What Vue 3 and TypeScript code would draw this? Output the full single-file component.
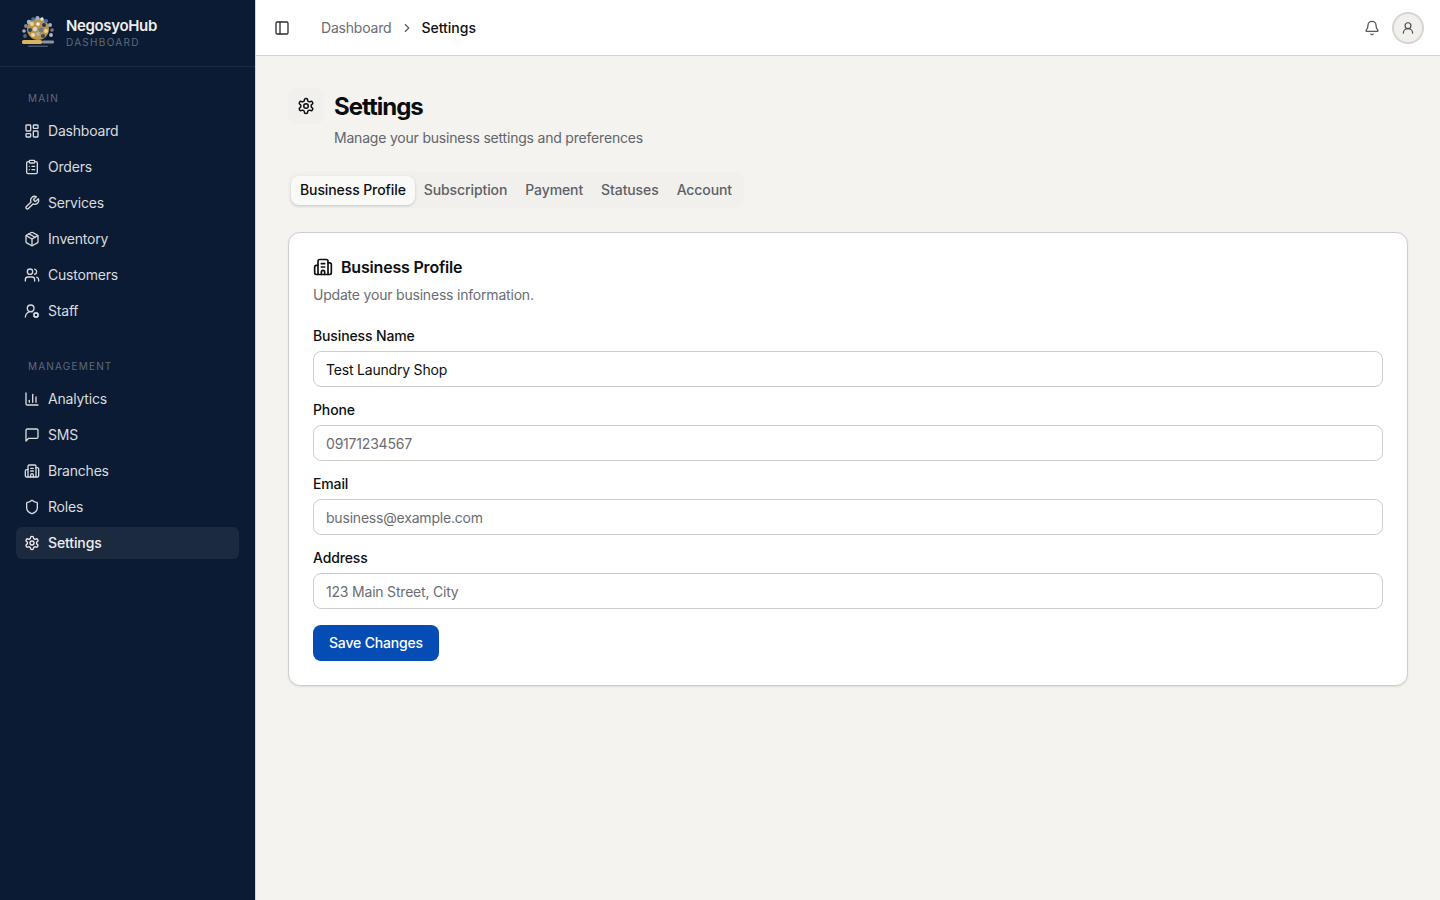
<script setup lang="ts">
import { ref } from 'vue'

interface NavItem {
	label: string
	icon: string[]
}

const gear = [
	'M12.22 2h-.44a2 2 0 0 0-2 2v.18a2 2 0 0 1-1 1.73l-.43.25a2 2 0 0 1-2 0l-.15-.08a2 2 0 0 0-2.73.73l-.22.38a2 2 0 0 0 .73 2.73l.15.1a2 2 0 0 1 1 1.72v.51a2 2 0 0 1-1 1.74l-.15.09a2 2 0 0 0-.73 2.73l.22.38a2 2 0 0 0 2.73.73l.15-.08a2 2 0 0 1 2 0l.43.25a2 2 0 0 1 1 1.73V20a2 2 0 0 0 2 2h.44a2 2 0 0 0 2-2v-.18a2 2 0 0 1 1-1.73l.43-.25a2 2 0 0 1 2 0l.15.08a2 2 0 0 0 2.73-.73l.22-.39a2 2 0 0 0-.73-2.73l-.15-.08a2 2 0 0 1-1-1.74v-.5a2 2 0 0 1 1-1.74l.15-.09a2 2 0 0 0 .73-2.73l-.22-.38a2 2 0 0 0-2.73-.73l-.15.08a2 2 0 0 1-2 0l-.43-.25a2 2 0 0 1-1-1.73V4a2 2 0 0 0-2-2z',
	'M9 12a3 3 0 1 0 6 0a3 3 0 1 0-6 0',
]

const building = [
	'M10 12h4',
	'M10 8h4',
	'M14 21v-3a2 2 0 0 0-4 0v3',
	'M6 10H4a2 2 0 0 0-2 2v7a2 2 0 0 0 2 2h16a2 2 0 0 0 2-2V9a2 2 0 0 0-2-2h-2',
	'M6 21V5a2 2 0 0 1 2-2h8a2 2 0 0 1 2 2v16',
]

const mainNav: NavItem[] = [
	{
		label: 'Dashboard',
		icon: [
			'M4 3h5a1 1 0 0 1 1 1v7a1 1 0 0 1-1 1H4a1 1 0 0 1-1-1V4a1 1 0 0 1 1-1z',
			'M15 3h5a1 1 0 0 1 1 1v3a1 1 0 0 1-1 1h-5a1 1 0 0 1-1-1V4a1 1 0 0 1 1-1z',
			'M15 12h5a1 1 0 0 1 1 1v7a1 1 0 0 1-1 1h-5a1 1 0 0 1-1-1v-7a1 1 0 0 1 1-1z',
			'M4 16h5a1 1 0 0 1 1 1v3a1 1 0 0 1-1 1H4a1 1 0 0 1-1-1v-3a1 1 0 0 1 1-1z',
		],
	},
	{
		label: 'Orders',
		icon: [
			'M9 2h6a1 1 0 0 1 1 1v2a1 1 0 0 1-1 1H9a1 1 0 0 1-1-1V3a1 1 0 0 1 1-1z',
			'M16 4h2a2 2 0 0 1 2 2v14a2 2 0 0 1-2 2H6a2 2 0 0 1-2-2V6a2 2 0 0 1 2-2h2',
			'M12 11h4',
			'M12 16h4',
			'M8 11h.01',
			'M8 16h.01',
		],
	},
	{
		label: 'Services',
		icon: [
			'M14.7 6.3a1 1 0 0 0 0 1.4l1.6 1.6a1 1 0 0 0 1.4 0l3.77-3.77a6 6 0 0 1-7.94 7.94l-6.91 6.91a2.12 2.12 0 0 1-3-3l6.91-6.91a6 6 0 0 1 7.94-7.94l-3.76 3.76z',
		],
	},
	{
		label: 'Inventory',
		icon: [
			'M11 21.73a2 2 0 0 0 2 0l7-4A2 2 0 0 0 21 16V8a2 2 0 0 0-1-1.73l-7-4a2 2 0 0 0-2 0l-7 4A2 2 0 0 0 3 8v8a2 2 0 0 0 1 1.73z',
			'M12 22V12',
			'M3.29 7 12 12l8.71-5',
			'm7.5 4.27 9 5.15',
		],
	},
	{
		label: 'Customers',
		icon: [
			'M16 21v-2a4 4 0 0 0-4-4H6a4 4 0 0 0-4 4v2',
			'M5 7a4 4 0 1 0 8 0a4 4 0 1 0-8 0',
			'M22 21v-2a4 4 0 0 0-3-3.87',
			'M16 3.13a4 4 0 0 1 0 7.75',
		],
	},
	{
		label: 'Staff',
		icon: [
			'm14.305 19.53.923-.382',
			'm15.228 16.852-.923-.383',
			'm16.852 15.228-.383-.923',
			'm16.852 20.772-.383.924',
			'm19.148 15.228.383-.923',
			'm19.53 21.696-.382-.924',
			'm20.772 16.852.924-.383',
			'm20.772 19.148.924.383',
			'M2 21a8 8 0 0 1 10.434-7.62',
			'M5 8a5 5 0 1 0 10 0a5 5 0 1 0-10 0',
			'M15 18a3 3 0 1 0 6 0a3 3 0 1 0-6 0',
		],
	},
]

const managementNav: NavItem[] = [
	{
		label: 'Analytics',
		icon: ['M3 3v16a2 2 0 0 0 2 2h16', 'M18 17V9', 'M13 17V5', 'M8 17v-3'],
	},
	{
		label: 'SMS',
		icon: ['M21 15a2 2 0 0 1-2 2H7l-4 4V5a2 2 0 0 1 2-2h14a2 2 0 0 1 2 2z'],
	},
	{ label: 'Branches', icon: building },
	{
		label: 'Roles',
		icon: [
			'M20 13c0 5-3.5 7.5-7.66 8.95a1 1 0 0 1-.67-.01C7.5 20.5 4 18 4 13V6a1 1 0 0 1 1-1c2 0 4.5-1.2 6.24-2.72a1.17 1.17 0 0 1 1.52 0C14.51 3.81 17 5 19 5a1 1 0 0 1 1 1z',
		],
	},
	{ label: 'Settings', icon: gear },
]

const navGroups = [
	{ title: 'MAIN', items: mainNav },
	{ title: 'MANAGEMENT', items: managementNav },
]

const tabs = ['Business Profile', 'Subscription', 'Payment', 'Statuses', 'Account']
const activeTab = ref('Business Profile')

const fields = [
	{ label: 'Business Name', value: 'Test Laundry Shop', placeholder: '' },
	{ label: 'Phone', value: '', placeholder: '09171234567' },
	{ label: 'Email', value: '', placeholder: 'business@example.com' },
	{ label: 'Address', value: '', placeholder: '123 Main Street, City' },
]

// speckled ring of the round logo badge
const logoDots = [
	{ x: 9, y: 7, r: 2.2, c: '#aeb6c1' },
	{ x: 13, y: 4, r: 1.8, c: '#3f6fb5' },
	{ x: 17.5, y: 3, r: 2, c: '#9fb0c6' },
	{ x: 22, y: 4, r: 1.7, c: '#e4e6ea' },
	{ x: 26, y: 6, r: 2, c: '#4a6fa8' },
	{ x: 30, y: 10, r: 2, c: '#a9b0ba' },
	{ x: 6, y: 11, r: 2, c: '#7d8794' },
	{ x: 4, y: 16, r: 1.8, c: '#a9afb8' },
	{ x: 32, y: 15, r: 1.8, c: '#77818f' },
	{ x: 5, y: 21, r: 1.9, c: '#596578' },
	{ x: 31, y: 20, r: 1.9, c: '#b5bac2' },
	{ x: 12, y: 9, r: 1.9, c: '#f0d68c' },
	{ x: 24, y: 10, r: 2, c: '#1f3557' },
	{ x: 10, y: 15, r: 2, c: '#2a3d5c' },
	{ x: 26, y: 16, r: 2, c: '#efd58a' },
	{ x: 13, y: 20, r: 2, c: '#f2dc9c' },
	{ x: 23, y: 21, r: 2.1, c: '#3d4a5d' },
	{ x: 18, y: 9, r: 1.8, c: '#f4f4f4' },
	{ x: 15, y: 14, r: 2.2, c: '#d3d6da' },
	{ x: 21, y: 15, r: 2.4, c: '#6f7885' },
	{ x: 18, y: 19, r: 2, c: '#aeb3ba' },
]
</script>

<template>
	<div class="layout">
		<aside class="sidebar">
			<div class="brand">
				<svg class="logo" viewBox="0 0 36 36" aria-hidden="true">
					<circle cx="18" cy="14" r="11" fill="#b8944f" />
					<circle v-for="dot in logoDots" :key="dot.x + '-' + dot.y" :cx="dot.x" :cy="dot.y" :r="dot.r" :fill="dot.c" />
					<rect x="2" y="25" width="20" height="4" rx="1.5" fill="#d9b45e" />
					<rect x="22" y="25.4" width="12" height="3.2" rx="1.4" fill="#8f949b" />
					<rect x="8" y="30.5" width="20" height="1.6" rx="0.8" fill="#4c5666" />
				</svg>
				<div class="brand-text">
					<span class="brand-name">NegosyoHub</span>
					<span class="brand-sub">DASHBOARD</span>
				</div>
			</div>

			<nav class="nav">
				<div v-for="group in navGroups" :key="group.title" class="nav-group">
					<div class="nav-title">{{ group.title }}</div>
					<a
						v-for="item in group.items"
						:key="item.label"
						:class="['nav-item', { active: item.label === 'Settings' }]"
					>
						<svg class="icon-16" viewBox="0 0 24 24">
							<path v-for="d in item.icon" :key="d" :d="d" />
						</svg>
						<span>{{ item.label }}</span>
					</a>
				</div>
			</nav>
		</aside>

		<div class="content">
			<header class="topbar">
				<button type="button" class="panel-toggle" aria-label="Toggle sidebar">
					<svg class="icon-16" viewBox="0 0 24 24">
						<path d="M5 3h14a2 2 0 0 1 2 2v14a2 2 0 0 1-2 2H5a2 2 0 0 1-2-2V5a2 2 0 0 1 2-2z" />
						<path d="M9 3v18" />
					</svg>
				</button>
				<div class="crumbs">
					<span class="crumb-link">Dashboard</span>
					<svg class="crumb-sep" viewBox="0 0 24 24">
						<path d="m9 18 6-6-6-6" />
					</svg>
					<span class="crumb-current">Settings</span>
				</div>
				<div class="top-actions">
					<button type="button" class="bell" aria-label="Notifications">
						<svg class="icon-16" viewBox="0 0 24 24">
							<path d="M10.268 21a2 2 0 0 0 3.464 0" />
							<path d="M3.262 15.326A1 1 0 0 0 4 17h16a1 1 0 0 0 .74-1.673C19.41 13.956 18 12.499 18 8A6 6 0 0 0 6 8c0 4.499-1.411 5.956-2.738 7.326" />
						</svg>
					</button>
					<button type="button" class="avatar" aria-label="Account">
						<svg class="icon-14" viewBox="0 0 24 24">
							<path d="M7 8a5 5 0 1 0 10 0a5 5 0 1 0-10 0" />
							<path d="M20 21a8 8 0 0 0-16 0" />
						</svg>
					</button>
				</div>
			</header>

			<main class="page">
				<div class="page-head">
					<div class="page-icon">
						<svg class="icon-18" viewBox="0 0 24 24">
							<path v-for="d in gear" :key="d" :d="d" />
						</svg>
					</div>
					<div>
						<h1>Settings</h1>
						<p>Manage your business settings and preferences</p>
					</div>
				</div>

				<div class="tabs">
					<button
						v-for="tab in tabs"
						:key="tab"
						type="button"
						:class="['tab', { active: activeTab === tab }]"
						@click="activeTab = tab"
					>
						{{ tab }}
					</button>
				</div>

				<section class="card">
					<div class="card-title">
						<svg class="icon-20" viewBox="0 0 24 24">
							<path v-for="d in building" :key="d" :d="d" />
						</svg>
						<h2>Business Profile</h2>
					</div>
					<p class="card-desc">Update your business information.</p>

					<form class="form" @submit.prevent>
						<div v-for="field in fields" :key="field.label" class="field">
							<label>{{ field.label }}</label>
							<input type="text" :value="field.value" :placeholder="field.placeholder" />
						</div>
						<button type="submit" class="save">Save Changes</button>
					</form>
				</section>
			</main>
		</div>
	</div>
</template>

<style>
html,
body {
	margin: 0;
	background: #f4f3f0;
}
</style>

<style scoped>
.layout {
	display: flex;
	min-height: 900px;
	font-family: Inter, "Liberation Sans", sans-serif;
	font-size: 14px;
	line-height: 20px;
	letter-spacing: -0.2px;
	color: #0d0f12;
}

svg {
	fill: none;
	stroke: currentColor;
	stroke-width: 2;
	stroke-linecap: round;
	stroke-linejoin: round;
	flex-shrink: 0;
	display: block;
}

.icon-14 {
	width: 14px;
	height: 14px;
}

.icon-16 {
	width: 16px;
	height: 16px;
}

.icon-18 {
	width: 18px;
	height: 18px;
}

.icon-20 {
	width: 20px;
	height: 20px;
}

.sidebar {
	width: 255px;
	flex-shrink: 0;
	background: #0b1b33;
	color: #e3e4e6;
}

.brand {
	display: flex;
	align-items: center;
	gap: 10px;
	height: 66px;
	padding: 0 20px;
	border-bottom: 1px solid #1a2a43;
}

.logo {
	width: 36px;
	height: 36px;
	stroke: none;
}

.brand-text {
	display: flex;
	flex-direction: column;
	padding-bottom: 1px;
}

.brand-name {
	font-size: 15px;
	line-height: 18px;
	font-weight: 600;
	letter-spacing: -0.35px;
	color: #eeeeee;
}

.brand-sub {
	font-size: 10px;
	line-height: 14px;
	letter-spacing: 1.3px;
	color: #5f6a7a;
}

.nav {
	display: flex;
	flex-direction: column;
	gap: 31px;
	padding: 23px 16px 0;
}

.nav-group {
	display: flex;
	flex-direction: column;
	gap: 4px;
}

.nav-title {
	height: 16px;
	margin-bottom: 5px;
	padding-left: 12px;
	font-size: 10px;
	line-height: 16px;
	letter-spacing: 1.2px;
	color: #5f6a7a;
}

.nav-item {
	display: flex;
	align-items: center;
	gap: 8px;
	height: 32px;
	padding: 0 8px;
	border-radius: 6px;
	color: #d9dbde;
}

.nav-item.active {
	background: #1c2a40;
	color: #eeeeee;
	font-weight: 500;
	letter-spacing: -0.12px;
}

.content {
	flex: 1;
	min-width: 0;
	border-left: 1px solid #d6d4cf;
}

.topbar {
	display: flex;
	align-items: center;
	height: 55px;
	padding: 0 16px 0 12px;
	background: #ffffff;
	border-bottom: 1px solid #d6d4cf;
}

.panel-toggle,
.bell {
	display: flex;
	align-items: center;
	justify-content: center;
	padding: 0;
	border: 0;
	background: none;
	color: #2b2f36;
}

.panel-toggle {
	width: 28px;
	height: 28px;
}

.crumbs {
	display: flex;
	align-items: center;
	margin-left: 25px;
}

.crumb-link {
	color: #6a6d73;
}

.crumb-sep {
	width: 14px;
	height: 14px;
	margin: 0 7px 0 9px;
	stroke: #55585e;
}

.crumb-current {
	color: #0d0f12;
	font-weight: 500;
	letter-spacing: 0;
}

.top-actions {
	display: flex;
	align-items: center;
	gap: 4px;
	margin-left: auto;
}

.bell {
	width: 32px;
	height: 32px;
	color: #55585e;
}

.avatar {
	display: flex;
	align-items: center;
	justify-content: center;
	width: 32px;
	height: 32px;
	padding: 0;
	box-sizing: border-box;
	border: 2px solid #d6d4cf;
	border-radius: 50%;
	background: #f1f0ed;
	color: #4b4e54;
}

.page {
	padding: 32px;
}

.page-head {
	display: flex;
	gap: 10px;
}

.page-icon {
	display: flex;
	align-items: center;
	justify-content: center;
	width: 36px;
	height: 36px;
	border-radius: 8px;
	background: #f1f0ed;
}

h1 {
	margin: 0;
	padding-top: 2px;
	font-size: 24px;
	line-height: 34px;
	font-weight: 700;
	letter-spacing: -1px;
	color: #0a0c0f;
}

.page-head p {
	margin: 4px 0 0;
	color: #62656b;
}

.tabs {
	display: inline-flex;
	box-sizing: border-box;
	height: 36px;
	margin-top: 24px;
	padding: 3px;
	border-radius: 10px;
	background: #f1f0ed;
}

.tab {
	height: 29px;
	margin-top: 1px;
	padding: 0 9px 1px;
	border: 0;
	border-radius: 8px;
	background: none;
	font: inherit;
	font-weight: 500;
	letter-spacing: -0.1px;
	color: #5d6066;
}

.tab.active {
	background: #f9f9f7;
	color: #0d0f12;
	box-shadow: 0 1px 3px rgba(0, 0, 0, 0.18);
}

.card {
	margin-top: 24px;
	padding: 24px;
	border: 1px solid #cfcdc8;
	border-radius: 12px;
	background: #ffffff;
	box-shadow: 0 1px 2px rgba(0, 0, 0, 0.08);
}

.card-title {
	display: flex;
	align-items: center;
	gap: 8px;
	height: 20px;
}

h2 {
	margin: 0;
	font-size: 16px;
	line-height: 20px;
	font-weight: 600;
	letter-spacing: -0.19px;
}

.card-desc {
	margin: 8px 0 0;
	color: #6a6d73;
}

.form {
	display: flex;
	flex-direction: column;
	align-items: flex-start;
	gap: 13px;
	margin-top: 21px;
}

.field {
	display: flex;
	flex-direction: column;
	gap: 5px;
	width: 100%;
}

.field label {
	font-weight: 500;
	letter-spacing: -0.13px;
}

.field input {
	box-sizing: border-box;
	width: 100%;
	height: 36px;
	padding: 0 12px;
	border: 1px solid #cfcdc8;
	border-radius: 8px;
	background: #ffffff;
	font: inherit;
	letter-spacing: -0.2px;
	color: #0d0f12;
	outline: none;
}

.field input::placeholder {
	color: #6a6d73;
	opacity: 1;
}

.save {
	height: 36px;
	margin-top: 3px;
	padding: 0 16px;
	border: 0;
	border-radius: 8px;
	background: #054db5;
	font: inherit;
	font-weight: 500;
	letter-spacing: -0.17px;
	color: #ffffff;
}
</style>
